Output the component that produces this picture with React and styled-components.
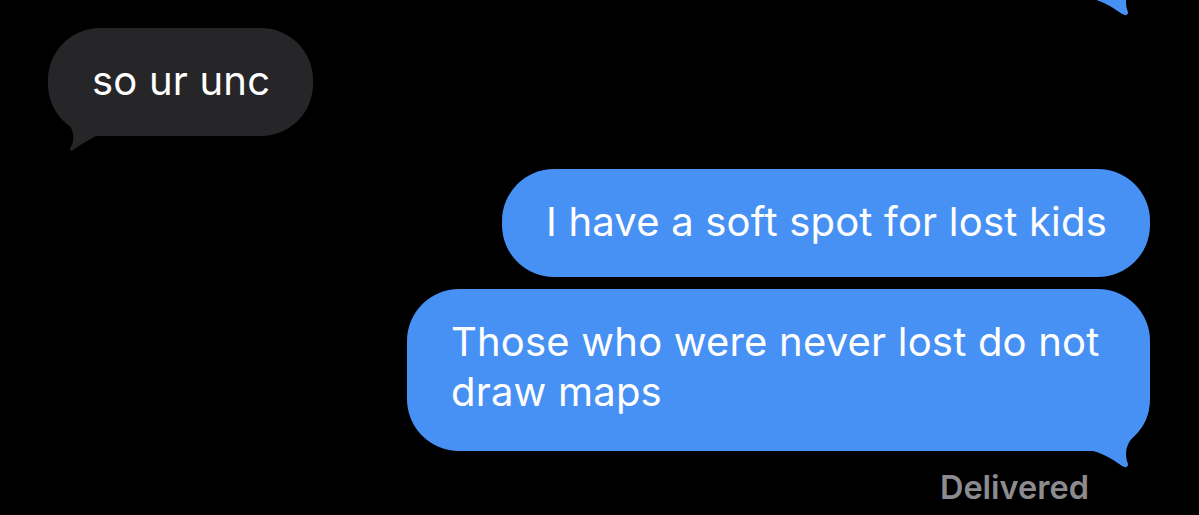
import styled, { createGlobalStyle } from "styled-components";

const GlobalStyle = createGlobalStyle`
  html, body {
    margin: 0;
    background: #000;
  }
  body {
    font-family: Inter, "Noto Sans", "Liberation Sans", sans-serif;
    overflow: hidden;
  }
`;

const BLUE = "#4791f5";
const GRAY = "#262629";

const Chat = styled.div`
  display: flex;
  flex-direction: column;
  padding: 0 49px 0 48px;
  height: 515px;
  overflow: hidden;
`;

const Row = styled.div`
  display: flex;
  justify-content: ${(p) => (p.$out ? "flex-end" : "flex-start")};
  margin-top: ${(p) => p.$gap}px;
`;

const Bubble = styled.div`
  position: relative;
  box-sizing: border-box;
  max-width: 743px;
  min-height: ${(p) => p.$minH || 0}px;
  padding: 28px 43px ${(p) => (p.$multi ? 34 : 30)}px 44px;
  border-radius: 52px;
  background: ${(p) => (p.$out ? BLUE : GRAY)};
  color: #fff;
  font-size: 40px;
  line-height: 50px;
  letter-spacing: 0.2px;
`;

const Tail = styled.svg`
  position: absolute;
  width: 70px;
  height: 70px;
  ${(p) =>
    p.$out
      ? "right: 0; bottom: -18px;"
      : "left: 0; bottom: -28px;"}
`;

const Status = styled.div`
  align-self: flex-end;
  margin: 18px 61px 0 0;
  font-size: 32.5px;
  line-height: 38px;
  font-weight: 600;
  color: #8c8c90;
`;

const TailOut = () => (
  <Tail $out viewBox="0 0 70 70">
    <path
      fill={BLUE}
      d="M5 10 L5 52 L13 52 C25 55 35 62 42 67 Q48 70 48 65 C44 55 46 45 54 37 C61 30 67 22 69 10 Z"
    />
  </Tail>
);

const TailIn = () => (
  <Tail viewBox="0 0 70 70">
    <path
      fill={GRAY}
      d="M14 18 C18 28 24 32 25 40 C26 47 24 51 22 55 Q21 58 25 56 C32 51 40 46 48 42 C52 40 56 38 60 37 L60 18 Z"
    />
  </Tail>
);

const App = () => (
  <>
    <GlobalStyle />
    <Chat>
      <Row $out $gap={-108}>
        <Bubble $out $minH={107} aria-hidden="true">
          <TailOut />
        </Bubble>
      </Row>
      <Row $gap={29}>
        <Bubble>
          so ur unc
          <TailIn />
        </Bubble>
      </Row>
      <Row $out $gap={33}>
        <Bubble $out>
          I have a soft spot for lost kids
        </Bubble>
      </Row>
      <Row $out $gap={12}>
        <Bubble $out $multi>
          Those who were never lost do not draw maps
          <TailOut />
        </Bubble>
      </Row>
      <Status>Delivered</Status>
    </Chat>
  </>
);

export default App;
